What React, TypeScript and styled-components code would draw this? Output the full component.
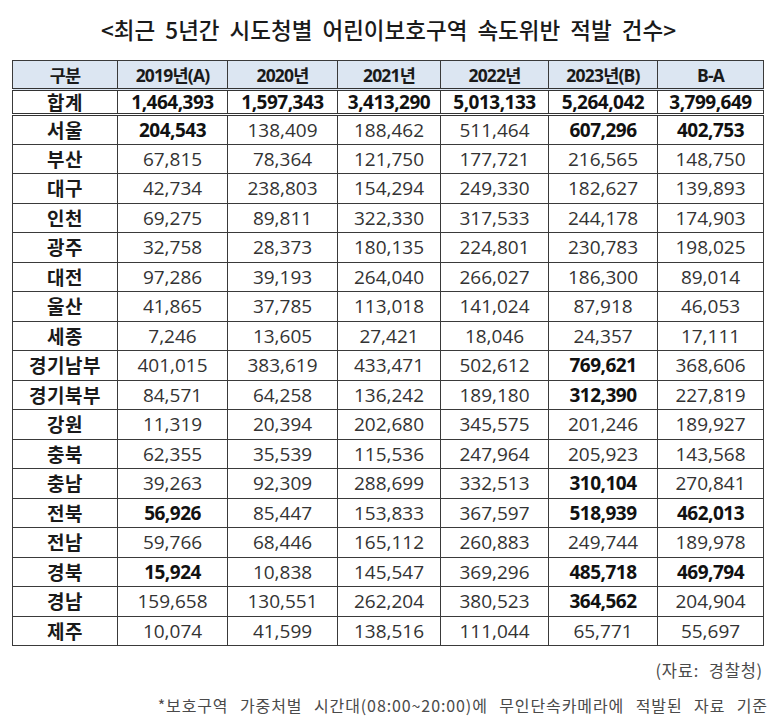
import React from "react";
import styled, { createGlobalStyle } from "styled-components";

const Global = createGlobalStyle`
  html, body { margin: 0; padding: 0; background: #ffffff; }
  body { font-family: "Open Sans", "Noto Sans CJK KR", sans-serif; }
`;

const Page = styled.div`
  width: 778px;
  height: 718px;
  display: flex;
  flex-direction: column;
  align-items: stretch;
  padding: 13px 15px 0 12px;
  box-sizing: border-box;
  overflow: hidden;
`;

const Title = styled.h1`
  margin: 0 0 15px 0;
  text-align: center;
  font-family: "Noto Sans CJK KR", sans-serif;
  font-weight: 500;
  font-size: 22.5px;
  line-height: 32px;
  color: #1a1a1a;
  letter-spacing: 0px;
  word-spacing: 5px;
  padding-left: 2px;
`;

const Table = styled.table`
  width: 751px;
  border-collapse: collapse;
  table-layout: fixed;
  border: 1px solid #333;
`;

const HeadCell = styled.th`
  background: #dce6f2;
  border: 1px solid #3a3a3a;
  border-bottom: 3px double #333;
  height: 27px;
  padding: 0;
  font-family: "Open Sans", "Noto Sans CJK KR", sans-serif;
  font-weight: 700;
  font-size: 17.5px;
  letter-spacing: -0.8px;
  color: #1a1a1a;
  text-align: center;
  vertical-align: middle;
`;

const Row = styled.tr<{ $total?: boolean }>`
  height: ${(p) => (p.$total ? "25px" : "29.5px")};
`;

const LabelCell = styled.td<{ $total?: boolean }>`
  border: 1px solid #3a3a3a;
  border-bottom: ${(p) => (p.$total ? "3px double #333" : "1px solid #3a3a3a")};
  padding: 0;
  text-align: center;
  vertical-align: middle;
  font-family: "Noto Sans CJK KR", sans-serif;
  font-weight: 700;
  font-size: 19px;
  line-height: 22px;
  color: #1a1a1a;
  letter-spacing: 0.5px;
`;

const NumCell = styled.td<{ $bold?: boolean; $total?: boolean }>`
  border: 1px solid #3a3a3a;
  border-bottom: ${(p) => (p.$total ? "3px double #333" : "1px solid #3a3a3a")};
  padding: 0;
  text-align: center;
  vertical-align: middle;
  font-family: "Open Sans", sans-serif;
  font-weight: ${(p) => (p.$bold ? 700 : 400)};
  font-size: 19px;
  line-height: 22px;
  letter-spacing: ${(p) => (p.$bold ? "-0.5px" : "0px")};
  color: ${(p) => (p.$bold ? "#111" : "#333")};
`;

const Source = styled.div`
  margin-top: 12px;
  text-align: right;
  font-family: "Noto Sans CJK KR", sans-serif;
  font-weight: 400;
  font-size: 16.5px;
  line-height: 24px;
  color: #4a4a4a;
  letter-spacing: 0.8px;
  word-spacing: 5px;
`;

const Note = styled.div`
  margin-top: 11px;
  text-align: right;
  font-family: "Noto Sans CJK KR", sans-serif;
  font-weight: 400;
  font-size: 16px;
  line-height: 24px;
  color: #4a4a4a;
  letter-spacing: 0.9px;
  word-spacing: 7px;
  margin-right: -5px;
  white-space: nowrap;
`;

type RowData = { label: string; values: string[]; bold: number[] };

const headers = ["구분", "2019년(A)", "2020년", "2021년", "2022년", "2023년(B)", "B-A"];
const widths = [105, 110, 110, 103, 108, 109, 106];

const total: RowData = {
  label: "합계",
  values: ["1,464,393", "1,597,343", "3,413,290", "5,013,133", "5,264,042", "3,799,649"],
  bold: [0, 1, 2, 3, 4, 5],
};

const rows: RowData[] = [
  { label: "서울", values: ["204,543", "138,409", "188,462", "511,464", "607,296", "402,753"], bold: [0, 4, 5] },
  { label: "부산", values: ["67,815", "78,364", "121,750", "177,721", "216,565", "148,750"], bold: [] },
  { label: "대구", values: ["42,734", "238,803", "154,294", "249,330", "182,627", "139,893"], bold: [] },
  { label: "인천", values: ["69,275", "89,811", "322,330", "317,533", "244,178", "174,903"], bold: [] },
  { label: "광주", values: ["32,758", "28,373", "180,135", "224,801", "230,783", "198,025"], bold: [] },
  { label: "대전", values: ["97,286", "39,193", "264,040", "266,027", "186,300", "89,014"], bold: [] },
  { label: "울산", values: ["41,865", "37,785", "113,018", "141,024", "87,918", "46,053"], bold: [] },
  { label: "세종", values: ["7,246", "13,605", "27,421", "18,046", "24,357", "17,111"], bold: [] },
  { label: "경기남부", values: ["401,015", "383,619", "433,471", "502,612", "769,621", "368,606"], bold: [4] },
  { label: "경기북부", values: ["84,571", "64,258", "136,242", "189,180", "312,390", "227,819"], bold: [4] },
  { label: "강원", values: ["11,319", "20,394", "202,680", "345,575", "201,246", "189,927"], bold: [] },
  { label: "충북", values: ["62,355", "35,539", "115,536", "247,964", "205,923", "143,568"], bold: [] },
  { label: "충남", values: ["39,263", "92,309", "288,699", "332,513", "310,104", "270,841"], bold: [4] },
  { label: "전북", values: ["56,926", "85,447", "153,833", "367,597", "518,939", "462,013"], bold: [0, 4, 5] },
  { label: "전남", values: ["59,766", "68,446", "165,112", "260,883", "249,744", "189,978"], bold: [] },
  { label: "경북", values: ["15,924", "10,838", "145,547", "369,296", "485,718", "469,794"], bold: [0, 4, 5] },
  { label: "경남", values: ["159,658", "130,551", "262,204", "380,523", "364,562", "204,904"], bold: [4] },
  { label: "제주", values: ["10,074", "41,599", "138,516", "111,044", "65,771", "55,697"], bold: [] },
];

const DataRow = ({ data, isTotal }: { data: RowData; isTotal?: boolean }) => (
  <Row $total={isTotal}>
    <LabelCell $total={isTotal}>{data.label}</LabelCell>
    {data.values.map((v, i) => (
      <NumCell key={i} $total={isTotal} $bold={data.bold.includes(i)}>
        {v}
      </NumCell>
    ))}
  </Row>
);

export default function App() {
  return (
    <>
      <Global />
      <Page>
        <Title>&lt;최근 5년간 시도청별 어린이보호구역 속도위반 적발 건수&gt;</Title>
        <Table>
          <colgroup>
            {widths.map((w, i) => (
              <col key={i} style={{ width: w }} />
            ))}
          </colgroup>
          <thead>
            <tr>
              {headers.map((h) => (
                <HeadCell key={h}>{h}</HeadCell>
              ))}
            </tr>
          </thead>
          <tbody>
            <DataRow data={total} isTotal />
            {rows.map((r) => (
              <DataRow key={r.label} data={r} />
            ))}
          </tbody>
        </Table>
        <Source>(자료: 경찰청)</Source>
        <Note>*보호구역 가중처벌 시간대(08:00~20:00)에 무인단속카메라에 적발된 자료 기준</Note>
      </Page>
    </>
  );
}
